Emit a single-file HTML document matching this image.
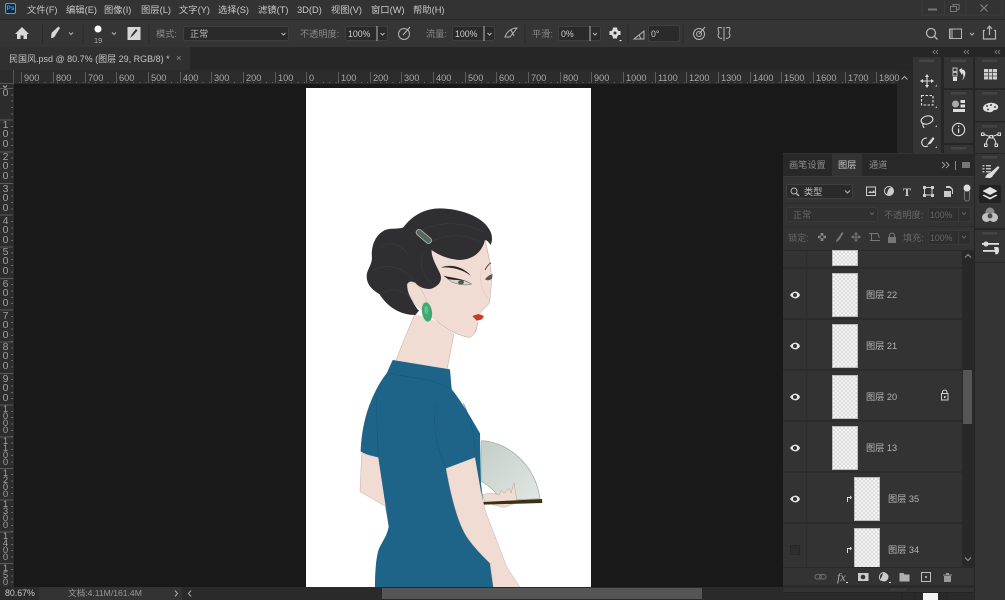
<!DOCTYPE html>
<html><head><meta charset="utf-8"><style>
*{box-sizing:border-box}
html,body{margin:0;padding:0;width:1005px;height:600px;overflow:hidden;background:#191919}
body{position:relative;font-family:"Liberation Sans","Noto Sans CJK SC",sans-serif;font-size:9.2px;color:#bbb}
.a,.t,.l,.d{position:absolute}
.t{white-space:nowrap;line-height:16px}
.m{top:2px;color:#c8c8c8;font-size:9.3px}
.g{color:#8a8a8a}
.f{color:#666}
.r{top:72px;font-size:9.2px;color:#a8a8a8;line-height:12px;white-space:nowrap;padding-left:2px;border-left:1px solid #5c5c5c;height:11px}
.v{left:1px;width:9px;text-align:center;font-size:10.5px;color:#a0a0a0;line-height:9.4px}
.v.w{line-height:7.1px;font-size:9.5px}
.b{position:absolute;background:#2a2a2a;border:1px solid #3f3f3f;border-radius:2px}
.row{position:absolute;left:783px;width:180px;background:#333;border-bottom:2px solid #2c2c2c}
.th{position:absolute;background:repeating-conic-gradient(#dcdcdc 0 25%,#f5f5f5 0 50%) 0 0/4px 4px;border:1px solid #bbb}
.n{font-size:9.2px;color:#b4b4b4}
.p{font-size:8.8px;color:#ccc}
</style></head><body>
<div class="a" style="left:0;top:0;width:1005px;height:19px;background:#333"></div>
<div class="a" style="left:0;top:19px;width:1005px;height:28px;background:#353535;border-top:1px solid #282828"></div>
<div class="a" style="left:0;top:47px;width:1005px;height:23px;background:#262626"></div>
<div class="a" style="left:0;top:47px;width:190px;height:24px;background:#303030"></div>
<div class="a" style="left:0;top:70px;width:912px;height:14px;background-color:#2c2c2c;background-image:repeating-linear-gradient(to right,#666 0 1px,transparent 1px 6.33px);background-size:100% 1px;background-position:0 12px;background-repeat:no-repeat"></div>
<div class="a" style="left:0;top:84px;width:14px;height:503px;background-color:#2c2c2c;background-image:repeating-linear-gradient(to bottom,#5a5a5a 0 1px,transparent 1px 31.67px),repeating-linear-gradient(to bottom,#666 0 1px,transparent 1px 6.33px);background-size:13px 100%,2px 100%;background-position:0 4px,11px 4px;background-repeat:no-repeat"></div>
<div class="a" style="left:0;top:70px;width:14px;height:14px;background:#2c2c2c;border-right:1px solid #555;border-bottom:1px solid #555"></div>
<div class="a" style="left:897px;top:70px;width:15px;height:517px;background:#282828"></div>

<!-- menu -->
<div class="a" style="left:5px;top:3px;width:11px;height:11px;background:#0d2a3e;border:1px solid #31a8ff;border-radius:2px;color:#31a8ff;font-size:6.5px;line-height:9px;text-align:center;font-weight:bold">Ps</div>
<span class="t m" style="left:27px">文件(F)</span>
<span class="t m" style="left:66px">编辑(E)</span>
<span class="t m" style="left:104px">图像(I)</span>
<span class="t m" style="left:141px">图层(L)</span>
<span class="t m" style="left:179px">文字(Y)</span>
<span class="t m" style="left:218px">选择(S)</span>
<span class="t m" style="left:258px">滤镜(T)</span>
<span class="t m" style="left:297px">3D(D)</span>
<span class="t m" style="left:331px">视图(V)</span>
<span class="t m" style="left:371px">窗口(W)</span>
<span class="t m" style="left:413px">帮助(H)</span>

<!-- toolbar text -->
<span class="t" style="left:94px;top:33px;font-size:7.5px;color:#aaa">19</span>
<span class="t g" style="left:156px;top:26px">模式:</span>
<div class="b" style="left:183px;top:26px;width:106px;height:15px"></div>
<span class="t" style="left:190px;top:26px;color:#bbb">正常</span>
<span class="t g" style="left:300px;top:26px">不透明度:</span>
<div class="b" style="left:345px;top:26px;width:43px;height:15px"></div>
<span class="t p" style="left:348px;top:26px">100%</span>
<span class="t g" style="left:426px;top:26px">流量:</span>
<div class="b" style="left:452px;top:26px;width:43px;height:15px"></div>
<span class="t p" style="left:455px;top:26px">100%</span>
<span class="t g" style="left:532px;top:26px">平滑:</span>
<div class="b" style="left:558px;top:26px;width:43px;height:15px"></div>
<span class="t p" style="left:561px;top:26px">0%</span>
<div class="b" style="left:648px;top:25px;width:32px;height:17px"></div>
<span class="t p" style="left:651px;top:26px">0°</span>

<!-- tab -->
<span class="t" style="left:9px;top:51px;font-size:9px;color:#c4c4c4">民国风.psd @ 80.7% (图层 29, RGB/8) *</span>
<span class="t" style="left:176px;top:51px;font-size:9.5px;color:#888">×</span>

<!-- rulers -->
<span class="a r" style="left:21px">900</span><span class="a r" style="left:53px">800</span><span class="a r" style="left:85px">700</span><span class="a r" style="left:116px">600</span><span class="a r" style="left:148px">500</span><span class="a r" style="left:180px">400</span><span class="a r" style="left:211px">300</span><span class="a r" style="left:243px">200</span><span class="a r" style="left:275px">100</span><span class="a r" style="left:306px">0</span><span class="a r" style="left:338px">100</span><span class="a r" style="left:370px">200</span><span class="a r" style="left:401px">300</span><span class="a r" style="left:433px">400</span><span class="a r" style="left:465px">500</span><span class="a r" style="left:496px">600</span><span class="a r" style="left:528px">700</span><span class="a r" style="left:560px">800</span><span class="a r" style="left:591px">900</span><span class="a r" style="left:623px">1000</span><span class="a r" style="left:655px">1100</span><span class="a r" style="left:686px">1200</span><span class="a r" style="left:718px">1300</span><span class="a r" style="left:750px">1400</span><span class="a r" style="left:781px">1500</span><span class="a r" style="left:813px">1600</span><span class="a r" style="left:845px">1700</span><span class="a r" style="left:876px">1800</span>

<div class="a v" style="top:89px">0</div>
<div class="a v" style="top:121px">1<br>0<br>0</div>
<div class="a v" style="top:153px">2<br>0<br>0</div>
<div class="a v" style="top:185px">3<br>0<br>0</div>
<div class="a v" style="top:217px">4<br>0<br>0</div>
<div class="a v" style="top:248px">5<br>0<br>0</div>
<div class="a v" style="top:280px">6<br>0<br>0</div>
<div class="a v" style="top:312px">7<br>0<br>0</div>
<div class="a v" style="top:343px">8<br>0<br>0</div>
<div class="a v" style="top:375px">9<br>0<br>0</div>
<div class="a v w" style="top:406px">1<br>0<br>0<br>0</div>
<div class="a v w" style="top:438px">1<br>1<br>0<br>0</div>
<div class="a v w" style="top:470px">1<br>2<br>0<br>0</div>
<div class="a v w" style="top:501px">1<br>3<br>0<br>0</div>
<div class="a v w" style="top:533px">1<br>4<br>0<br>0</div>
<div class="a v w" style="top:565px">1<br>5<br>0</div>

<!-- document -->
<div class="a" style="left:306px;top:88px;width:285px;height:499px;background:#fff"></div>

<svg class="a" style="left:0;top:0" width="1005" height="600" viewBox="0 0 1005 600">
<defs><linearGradient id="fan" x1="0" y1="0" x2="1" y2="1"><stop offset="0" stop-color="#c3cec8"/><stop offset="1" stop-color="#e2e7e4"/></linearGradient></defs>
<path d="M3 85.500l2 2 2-2" fill="none" stroke="#aaa"/>
<!-- head, 3x zoom coords -->
<g transform="translate(350,190) scale(.3333)">
<path d="M195 372C170 430 145 490 125 545L290 545L312 430L250 390Z" fill="#f0dcd2"/>
<path d="M195 372C170 430 145 490 125 545M312 432L290 545" fill="none" stroke="#c0a89e" stroke-width="1.500"/>
<path d="M245 178L405 150L415 190L425 260L420 322L418 340L395 365L385 395L380 425L360 442C335 440 300 425 260 395L218 362L190 335L172 282L200 260Z" fill="#f0dcd2"/>
<path d="M405 150C415 190 426 240 424 275C423 300 421 320 418 340C410 350 400 355 393 366M382 398C382 415 375 435 360 442C335 440 300 425 258 392" fill="none" stroke="#a8958c" stroke-width="1.300"/>
<path d="M160 112C190 72 230 55 270 55C330 56 395 78 418 118C428 135 428 150 422 165C415 155 410 150 405 150C398 180 375 208 330 210C295 208 265 195 245 180C243 200 258 225 270 250C278 270 270 285 245 296C225 300 205 290 195 278C185 272 175 275 172 282C172 305 190 345 207 362L196 375C155 375 115 355 88 312C68 300 50 285 50 258C50 240 64 228 66 205C62 170 75 135 105 120C125 113 145 118 160 112Z" fill="#2f2f31"/>
<path d="M90 175C120 150 150 160 175 195M70 240C110 220 160 230 190 270M95 310C130 290 165 300 185 330M200 130C260 90 340 95 400 125M230 160C290 130 350 130 395 160M220 190C205 215 215 255 250 285" fill="none" stroke="#48484a" stroke-width="1.500" opacity=".7"/>
<rect x="194" y="130" width="55" height="18" rx="9" transform="rotate(40 221 139)" fill="#56675f" stroke="#c5d0ca" stroke-width="2"/>
<path d="M275 232C305 222 340 232 361 256C338 238 305 230 275 232Z" fill="#2a2220" stroke="#2a2220" stroke-width="1"/>
<path d="M405 240C410 230 417 222 423 218" fill="none" stroke="#2a2220" stroke-width="2.500"/>
<path d="M282 258C305 264 340 266 365 282C350 288 325 284 305 276Z" fill="#d8d2cc" stroke="#2a2522" stroke-width="1"/>
<path d="M282 258C305 264 340 266 365 282L345 273C325 269 305 270 295 267Z" fill="#221e1c"/>
<ellipse cx="333" cy="277" rx="9" ry="6" fill="#5a5654"/>
<path d="M405 268C412 258 420 255 428 252L426 266C418 272 412 272 405 268Z" fill="#5a5654"/>
<path d="M172 282C170 310 190 345 218 360L232 336L215 300L195 278Z" fill="#f0dcd2" stroke="#c4aca2" stroke-width="1.300"/>
<path d="M398 230C385 270 395 305 417 328" fill="none" stroke="#cbb6ac" stroke-width="1"/>
<ellipse cx="231" cy="366" rx="15" ry="29" transform="rotate(-8 231 366)" fill="#3fa873"/>
<ellipse cx="229" cy="360" rx="6" ry="13" fill="#63c091"/>
<path d="M367 378L385 372L402 378L396 388L380 392Z" fill="#c63a2a"/>
</g>
<!-- body, 3x zoom coords -->
<g transform="translate(350,350) scale(.3333)">
<path d="M395 272C470 275 555 340 570 446L450 452C440 425 415 405 395 395Z" fill="url(#fan)" stroke="#9aa5a0" stroke-width="2"/>
<path d="M398 435C415 428 435 430 447 435L455 420L462 430L478 415L483 430L492 398L500 450L490 462L462 472L405 458Z" fill="#f0dcd2" stroke="#b8a299" stroke-width="1.500"/>
<path d="M400 456L576 447L577 459L400 464Z" fill="#3c2f14"/>
<path d="M35 310L30 425L105 468L118 530L85 322Z" fill="#f0dcd2" stroke="#c4aca2" stroke-width="1.500"/>
<path d="M128 30L300 58L305 118C325 140 365 205 390 250L393 400L425 655L430 712L75 712C75 670 78 610 90 590C100 570 112 555 116 530L85 322C65 318 45 312 32 305C33 270 38 230 50 190C62 150 85 100 110 70Z" fill="#1d6488"/>
<path d="M288 355L375 322L392 420L405 480L470 650L510 712L430 712L420 640C395 615 370 590 350 560C325 520 305 450 288 355Z" fill="#f0dcd2"/>
<path d="M288 355C305 450 325 520 350 560C370 590 395 615 420 640L430 712M392 420L405 480L470 650L510 712" fill="none" stroke="#c4aca2" stroke-width="1.300"/>
<g fill="none" stroke="#17577a" stroke-width="1.600">
<path d="M115 70C190 85 250 85 305 118"/>
<path d="M85 322L78 140"/>
<path d="M258 160C245 220 260 300 288 355"/>
<path d="M340 160C365 210 375 260 375 322"/>
</g>
</g>

<!-- toolbar icons -->
<g fill="#d8d8d8">
<path d="M22 27l-7 7h2v5h3.500v-3.500h3V39H27v-5h2z"/>
<path d="M51 38c2 0 4-1 4.500-3L60 28l-1.500-1.500-6 5.500c-1.500.5-1 4-1.500 6z"/>
<circle cx="98" cy="29" r="3.500" fill="#fff"/>
<rect x="127.500" y="27" width="13" height="13" fill="#d6d6d6"/>
<path d="M130 38l2-4 4-5 1.500 1.500-4 4.500z" fill="#333"/>
</g>
<g fill="none" stroke="#b5b5b5" stroke-width="1">
<path d="M69 32.500l2 2 2-2M112 32.500l2 2 2-2M281.500 33l2 2 2-2M380.500 33l2 2 2-2M487.500 33l2 2 2-2M593 33l2 2 2-2"/>
<path d="M377 26v15M484 26v15M590 26v15"/>
<circle cx="404" cy="34" r="5.500"/><path d="M403 35l7-8"/>
<path d="M505 37c2-6 7-9 12-9l-7 9c-2 0-3 0-5 0zM511 30l3 6"/>
<path d="M42.500 24v19M83 24v19M149 24v19M525 24v19M628 24v19M683 24v19" stroke="#292929"/>
<path d="M634 39l10-8v8zM639 35l2 4"/>
<circle cx="699" cy="34" r="5.500"/><circle cx="699" cy="34" r="2.500"/><path d="M699 34l6-7"/>
<path d="M724 27v14M722 28c-2-1-4-1-4 1l1 4-1 2c0 3 3 4 4 3M726 28c2-1 4-1 4 1l-1 4 1 2c0 3-3 4-4 3"/>
<circle cx="931" cy="33" r="4.500" stroke-width="1.300"/><path d="M934.500 36.500l3 3" stroke-width="1.300"/>
<rect x="949.500" y="29" width="12" height="9.500"/>
<path d="M970 33l2 2 2-2"/>
<path d="M985 30.500h-1.500v8.500h12v-8.500H994M989.500 35v-8M987 29l2.500-3 2.500 3" stroke-width="1.200"/>
<!-- win -->
<path d="M928 9.500h9" stroke="#777" stroke-width="2"/>
<rect x="950.500" y="6.500" width="6" height="5" stroke="#777"/><path d="M953 6.500V4.500h6v5h-2" stroke="#777"/>
<path d="M980.500 4.500l7 7M987.500 4.500l-7 7" stroke="#888"/>
<path d="M922 .5v14.500H1002V.5M944.500 1v14M966 1v14" stroke="#3d3d3d"/>
</g>
<circle cx="615" cy="33" r="4" fill="#dcdcdc"/><circle cx="615" cy="33" r="1.500" fill="#333"/>
<path d="M613 27.500h4l.5 2h-5zM613 38.500h4l.5-2h-5zM609.500 31v4h2v-4zM620.500 31v4h-2v-4z" fill="#dcdcdc"/>
<path d="M619 40h3l-1.500 1.500z" fill="#ddd"/>
<rect x="950" y="29.500" width="3" height="8.500" fill="#777"/>

<!-- dock backgrounds -->
<rect x="912" y="47" width="93" height="553" fill="#262626"/>
<rect x="897" y="47" width="15" height="23" fill="#262626"/>
<g fill="#343434">
<rect x="913" y="57" width="28" height="96"/>
<rect x="944" y="57" width="29" height="31"/>
<rect x="944" y="90" width="29" height="53"/>
<rect x="944" y="145" width="29" height="8"/>
<rect x="975" y="57" width="30" height="31"/>
<rect x="975" y="90" width="30" height="31"/>
<rect x="975" y="122.500" width="30" height="30.500"/>
<rect x="975" y="154" width="30" height="74"/>
<rect x="975" y="230" width="30" height="32"/>
<rect x="975" y="263" width="30" height="337"/>
</g>
<g fill="#444">
<rect x="919" y="59.500" width="15" height="2.500"/><rect x="951" y="59.500" width="15" height="2.500"/><rect x="982" y="59.500" width="15" height="2.500"/>
<rect x="951" y="92" width="15" height="2.500"/><rect x="982" y="92" width="15" height="2.500"/><rect x="982" y="125" width="15" height="2.500"/>
<rect x="982" y="156" width="15" height="2.500"/><rect x="982" y="232" width="15" height="2.500"/><rect x="951" y="147" width="15" height="2.500"/>
</g>
<g fill="none" stroke="#8a8a8a" stroke-width=".8">
<path d="M935 50l-2 2 2 2M938 50l-2 2 2 2M966 50l-2 2 2 2M969 50l-2 2 2 2M997 50l-2 2 2 2M1000 50l-2 2 2 2"/>
</g>
<path d="M901.500 79.500l3-3 3 3" fill="none" stroke="#aaa"/>

<!-- col A icons -->
<g fill="none" stroke="#ddd" stroke-width="1.100">
<path d="M927 75.500v11M921.500 81h11" />
<rect x="921.500" y="95.500" width="11.500" height="9.500" stroke-dasharray="2.500 1.500"/>
<ellipse cx="927" cy="120" rx="6" ry="4" transform="rotate(-15 927 120)"/><path d="M923 124c-1 2 1 3 1 4"/>
<path d="M927 138c-4 0-6 3-5 6 1 3 4 3 6 2"/>
</g>
<path d="M925 77h4l-2-3zM925 85h4l-2 3zM923 79v4l-3-2zM931 79v4l3-2z" fill="#ddd"/>
<path d="M927 145l2-3 4-5 1.500 1.500-3.500 5z" fill="#ddd"/>
<path d="M937 86.500h-2l2-2zM937 108h-2l2-2zM937 127h-2l2-2zM937 148h-2l2-2z" fill="#bbb"/>
<!-- col B icons -->
<g fill="#ddd">
<rect x="953" y="68" width="4" height="3.500" fill="none" stroke="#ddd" stroke-width=".8"/><rect x="953" y="72.500" width="4" height="3.500" fill="none" stroke="#ddd" stroke-width=".8"/><rect x="953" y="77" width="4" height="4"/>
<path d="M959 70l3-2v1.500c3 0 4 3 3 6s-2 4-3 5c1-2 2-4 1-6-.5-1-1-1.500-1-1.500V75z"/>
<circle cx="955.500" cy="104" r="3.500" fill="#aaa"/><rect x="960.500" y="100" width="4.500" height="3"/><rect x="960.500" y="104.500" width="4.500" height="3"/><rect x="953" y="109" width="12" height="3"/>
</g>
<circle cx="958.500" cy="129.500" r="6.200" fill="none" stroke="#ddd" stroke-width="1.100"/>
<path d="M958 125.500h1.200v1.500H958zM958 128.500h1.200v4.500H958z" fill="#ddd"/>
<!-- col C icons -->
<rect x="984" y="69" width="13" height="10.500" fill="#d0d0d0"/>
<path d="M984 72.500h13M984 76h13M988.500 69v10.500M992.500 69v10.500" stroke="#444" stroke-width=".8"/>
<path d="M983 108c0-3 5-6 10-5 4 .5 6 3 5 5-1 3-4 1-5 3-1 1-2 1.500-5 1-3-.5-5-1.500-5-4z" fill="#ddd"/>
<g fill="#444"><circle cx="987" cy="106" r="1"/><circle cx="991" cy="105" r="1"/><circle cx="995" cy="107" r="1"/><circle cx="988" cy="109.500" r="1"/></g>
<g fill="none" stroke="#ddd" stroke-width="1"><path d="M983 134l8 3 8-3M986 145c0-4 2-8 5-8s5 4 5 8"/></g>
<g fill="#333" stroke="#ddd"><rect x="981.500" y="133" width="2.500" height="2.500"/><rect x="998" y="133" width="2.500" height="2.500"/><rect x="990" y="135.500" width="2.500" height="2.500"/><rect x="984.500" y="144" width="2.500" height="2.500"/><rect x="995" y="144" width="2.500" height="2.500"/></g>
<path d="M982.500 165h2v1.500h-2zM986 165h5v1.500h-5zM982.500 168h2v1.500h-2zM986 168h5v1.500h-5zM982.500 171h2v1.500h-2zM986 171h5v1.500h-5z" fill="#bbb"/>
<path d="M989 178c-2 0-3-.5-4 0 1-3 3-5 5-5l8-7 1.500 1.500-6.500 8c-1 2-2 2.500-4 2.500z" fill="#ddd"/>
<rect x="979" y="185" width="22" height="18" fill="#222"/>
<path d="M990 187l7.500 4-7.500 4-7.500-4zM984 194.500l6 3 6-3 1.500 1-7.500 4-7.500-4z" fill="#e2e2e2"/>
<circle cx="990" cy="212" r="4.500" fill="#8a8a8a"/><circle cx="986.500" cy="217.500" r="4.500" fill="#c0c0c0"/><circle cx="993.500" cy="217.500" r="4.500" fill="#c0c0c0"/><circle cx="990" cy="216" r="2.500" fill="#4a4a4a"/>
<rect x="982" y="243" width="17" height="1.800" fill="#ddd"/><circle cx="986" cy="244" r="2.500" fill="#ddd"/><rect x="983" y="250" width="14" height="1.800" fill="#ddd"/><path d="M994 247h3.500c2 0 2 6 0 7l-2 .5z" fill="#ddd"/>
</svg>

<!-- layers panel -->
<div class="a" style="left:783px;top:153px;width:191px;height:432px;background:#333"></div>
<div class="a" style="left:783px;top:154px;width:191px;height:22px;background:#282828"></div>
<div class="a" style="left:832px;top:154px;width:30px;height:23px;background:#333"></div>
<span class="t g" style="left:789px;top:157px;color:#8c8c8c">画笔设置</span>
<span class="t" style="left:838px;top:157px;color:#c8c8c8">图层</span>
<span class="t g" style="left:869px;top:157px;color:#8c8c8c">通道</span>

<div class="b" style="left:786px;top:184px;width:67px;height:15px"></div>
<span class="t" style="left:804px;top:184px;color:#c0c0c0">类型</span>

<div class="b" style="left:786px;top:207px;width:92px;height:15px;background:#303030;border-color:#393939"></div>
<span class="t f" style="left:793px;top:207px">正常</span>
<span class="t f" style="left:884px;top:207px">不透明度:</span>
<div class="b" style="left:928px;top:207px;width:43px;height:15px;background:#2e2e2e;border-color:#393939"></div>
<span class="t f" style="left:930px;top:207px;font-size:8.8px">100%</span>

<span class="t f" style="left:788px;top:230px">锁定:</span>
<span class="t f" style="left:903px;top:230px">填充:</span>
<div class="b" style="left:928px;top:230px;width:43px;height:15px;background:#2e2e2e;border-color:#393939"></div>
<span class="t f" style="left:930px;top:230px;font-size:8.8px">100%</span>
<div class="a" style="left:783px;top:176px;width:191px;height:1px;background:#3a3a3a"></div>
<div class="a" style="left:783px;top:250px;width:191px;height:1px;background:#292929"></div>
<div class="a" style="left:783px;top:203px;width:191px;height:1px;background:#2d2d2d"></div>
<div class="a" style="left:783px;top:226px;width:191px;height:1px;background:#2d2d2d"></div>

<!-- rows -->
<div class="row" style="top:251px;height:18px"></div>
<div class="row" style="top:269px;height:51px"></div>
<div class="row" style="top:320px;height:51px"></div>
<div class="row" style="top:371px;height:51px"></div>
<div class="row" style="top:422px;height:51px"></div>
<div class="row" style="top:473px;height:51px"></div>
<div class="row" style="top:524px;height:43px;border:0"></div>
<div class="a" style="left:806px;top:251px;width:1px;height:316px;background:#2d2d2d"></div>
<div class="th" style="left:832px;top:250px;width:26px;height:16px"></div>
<div class="th" style="left:832px;top:273px;width:26px;height:44px"></div>
<div class="th" style="left:832px;top:324px;width:26px;height:44px"></div>
<div class="th" style="left:832px;top:375px;width:26px;height:44px"></div>
<div class="th" style="left:832px;top:426px;width:26px;height:44px"></div>
<div class="th" style="left:854px;top:477px;width:26px;height:44px"></div>
<div class="th" style="left:854px;top:528px;width:26px;height:39px;border-bottom:0"></div>
<span class="t n" style="left:866px;top:287px">图层 22</span>
<span class="t n" style="left:866px;top:338px">图层 21</span>
<span class="t n" style="left:866px;top:389px">图层 20</span>
<span class="t n" style="left:866px;top:440px">图层 13</span>
<span class="t n" style="left:888px;top:491px">图层 35</span>
<span class="t n" style="left:888px;top:542px">图层 34</span>

<!-- scrollbar -->
<div class="a" style="left:962px;top:251px;width:12px;height:316px;background:#282828"></div>
<div class="a" style="left:963px;top:370px;width:9px;height:54px;background:#565656"></div>

<!-- bottom bar -->
<div class="a" style="left:783px;top:567px;width:191px;height:20px;background:#333;border-top:1px solid #292929"></div>
<div class="a" style="left:783px;top:585px;width:191px;height:15px;background:#2a2a2a"></div>
<div class="a" style="left:783px;top:588px;width:191px;height:4px;background:#333"></div>
<span class="t" style="left:837px;top:569px;font-family:'Liberation Serif',serif;font-style:italic;font-size:12px;color:#aaa">fx</span>

<!-- status -->
<div class="a" style="left:0;top:587px;width:783px;height:13px;background:#2a2a2a"></div>
<div class="a" style="left:39px;top:587px;width:143px;height:13px;background:#333"></div>
<div class="a" style="left:382px;top:588px;width:320px;height:11px;background:#555"></div>
<span class="t" style="left:5px;top:585px;font-size:8.8px;color:#c8c8c8">80.67%</span>
<span class="t g" style="left:68px;top:585px;font-size:8.6px;color:#999">文档:4.11M/161.4M</span>

<svg class="a" style="left:0;top:0;pointer-events:none" width="1005" height="600" viewBox="0 0 1005 600">
<g fill="none" stroke="#b5b5b5" stroke-width="1">
<path d="M849 190.500l2.500 2.500 2.500-2.500" transform="translate(-4 0)"/>
<circle cx="794" cy="191" r="3"/><path d="M796.500 193.500l2.500 2.500" stroke-width="1.500"/>
<path d="M175 590.500l2.500 3-2.500 3M191 590.500l-2.500 3 2.500 3" stroke="#aaa"/>
<path d="M870 212.500l2 2 2-2M962 212.500l2 2 2-2M962 236l2 2 2-2" stroke="#666"/>
<path d="M958.500 207.500v14M958.500 230.500v14" stroke="#3a3a3a"/>
<path d="M942 162l3 3-3 3M946 162l3 3-3 3" stroke="#999"/>
<path d="M955.500 161v9" stroke="#888"/>
<path d="M965 257.500l3-3 3 3M965 557.500l3 3 3-3" stroke="#999"/>
<rect x="866.500" y="187" width="9" height="8.500" stroke="#ccc"/>
<circle cx="889" cy="191" r="4.500" stroke="#ccc"/>
<rect x="924.500" y="187.500" width="7.500" height="7.500" stroke="#ccc"/>
<rect x="964.500" y="190" width="5" height="11" rx="2.500" stroke="#777"/>
</g>
<path d="M868 193l2-2 2 1 2-2 1 3z" fill="#ccc"/>
<path d="M889 186.500a4.500 4.500 0 0 1 0 9c1-2-4-6 0-9z" fill="#ccc" transform="rotate(40 889 191)"/>
<text x="903" y="196" font-family="Liberation Serif" font-size="12" font-weight="bold" fill="#ccc">T</text>
<g fill="#ccc"><rect x="923" y="186" width="3" height="3"/><rect x="931" y="186" width="3" height="3"/><rect x="923" y="194" width="3" height="3"/><rect x="931" y="194" width="3" height="3"/>
<path d="M944 191h7v6h-7zM946 186h4l3 3v5h-1v-4l-2-2-4 0z"/>
<circle cx="967" cy="188" r="3.500" fill="#ddd"/></g>
<!-- lock row -->
<g fill="#777">
<rect x="818" y="233" width="8" height="8" fill="#888"/><path d="M818 233h2.700v2.700H818zM823.300 233H826v2.700h-2.700zM820.700 235.700h2.600v2.600h-2.600zM818 238.300h2.700V241H818zM823.300 238.300H826V241h-2.700z" fill="#333"/>
<path d="M836 242c0-2 1-3 2-4l4-6 1.500 1-3.500 6c-1 1-2 2.500-4 3z"/>
<path d="M856 232l2 2.500h-4zM856 242l2-2.500h-4zM851 237l2.500-2v4zM861 237l-2.500-2v4z"/><rect x="855.500" y="234" width="1" height="6"/><rect x="853" y="236.500" width="6" height="1"/>
<path d="M869 233h9v1h-9zM870 240h10v1h-10zM871 233h1v8h-1zM877 233h1l2 5h-1z"/>
<rect x="888" y="237" width="8" height="6"/>
</g>
<path d="M889.500 237v-1.500a2.500 2.500 0 0 1 5 0V237" fill="none" stroke="#777" stroke-width="1.100"/>
<!-- eyes -->
<g id="eyes">
<path d="M790 295c3-4.500 8-4.500 10 0-2 4.500-7 4.500-10 0z" fill="#e8e8e8"/><circle cx="795" cy="295" r="2" fill="#333"/>
<path d="M790 346c3-4.500 8-4.500 10 0-2 4.500-7 4.500-10 0z" fill="#e8e8e8"/><circle cx="795" cy="346" r="2" fill="#333"/>
<path d="M790 397c3-4.500 8-4.500 10 0-2 4.500-7 4.500-10 0z" fill="#e8e8e8"/><circle cx="795" cy="397" r="2" fill="#333"/>
<path d="M790 448c3-4.500 8-4.500 10 0-2 4.500-7 4.500-10 0z" fill="#e8e8e8"/><circle cx="795" cy="448" r="2" fill="#333"/>
<path d="M790 499c3-4.500 8-4.500 10 0-2 4.500-7 4.500-10 0z" fill="#e8e8e8"/><circle cx="795" cy="499" r="2" fill="#333"/>
</g>
<rect x="790.500" y="545.500" width="9" height="9" fill="#2e2e2e" stroke="#272727"/>
<path d="M847 497h3v-1.500l2 2-2 2V498h-2v4h-1zM847 548h3v-1.500l2 2-2 2V549h-2v4h-1z" fill="#ddd"/>
<path d="M941.500 393.500h6.500v6.500h-6.500z" fill="none" stroke="#ccc"/>
<path d="M942.500 393.500v-1.500a2.300 2.300 0 0 1 4.500 0v1.500" fill="none" stroke="#ccc"/>
<rect x="944" y="396" width="1.500" height="2" fill="#ccc"/>
<!-- panel menu -->
<rect x="962" y="162" width="8" height="6" fill="#777"/>
<!-- footer icons -->
<g fill="none" stroke="#666" stroke-width="1.200"><rect x="815" y="574.500" width="6.500" height="4.500" rx="2.200"/><rect x="819.500" y="574.500" width="6.500" height="4.500" rx="2.200"/></g>
<rect x="858" y="573" width="10.500" height="8" fill="#ccc"/><circle cx="863" cy="577" r="2.300" fill="#333"/>
<circle cx="884" cy="577" r="4.500" fill="#ccc"/><path d="M884 572.500a4.500 4.500 0 0 0-3.200 7.700z" fill="#333" stroke="#ccc"/>
<path d="M899.500 573h4l1 1.500h5v7h-10z" fill="#b0b0b0"/>
<rect x="921.500" y="572.500" width="9" height="9" fill="none" stroke="#bbb"/><path d="M925 577h2M926 576v2" stroke="#ccc"/>
<path d="M943 574.500h9v1h-9zM944 576h7v6h-7zM946 573h3v1.500h-3z" fill="#999"/>
<path d="M846 582h2v1h-2zM889 582h2v1h-2z" fill="#ddd"/>
<!-- lower right strip -->
<path d="M783 592.500h191M902 592v8M915 592v8M940 592v8M947 592v8" stroke="#242424"/>
<rect x="923" y="593" width="15" height="7" fill="#f4f4f4"/>
<rect x="890" y="588.500" width="16" height="2" fill="#3c3c3c"/>
</svg>
</body></html>
